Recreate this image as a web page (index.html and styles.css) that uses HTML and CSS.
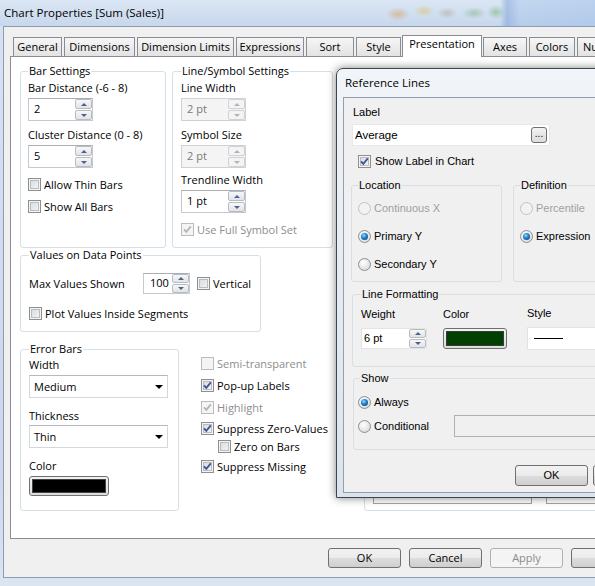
FILE: index.html
```html
<!DOCTYPE html>
<html lang="en">
<head>
<meta charset="utf-8">
<title>Chart Properties</title>
<link rel="stylesheet" href="styles.css">
</head>
<body>
<div class="window">
  <div class="titlebar"><span class="title">Chart Properties [Sum (Sales)]</span></div>
  <div class="client">
    <div class="tabs">
      <div class="tab t-general">General</div>
      <div class="tab t-dims">Dimensions</div>
      <div class="tab t-limits">Dimension Limits</div>
      <div class="tab t-expr">Expressions</div>
      <div class="tab t-sort">Sort</div>
      <div class="tab t-style">Style</div>
      <div class="tab sel t-pres">Presentation</div>
      <div class="tab t-axes">Axes</div>
      <div class="tab t-colors">Colors</div>
      <div class="tab t-num">Number</div>
    </div>
    <div class="panel">
      <div class="left-col">
        <div class="row1">
          <fieldset class="group g-bar">
            <legend>Bar Settings</legend>
            <div class="lbl">Bar Distance (-6 - 8)</div>
            <div class="spin"><div class="val">2</div><div class="btns"><span class="sb up"></span><span class="sb dn"></span></div></div>
            <div class="lbl next">Cluster Distance (0 - 8)</div>
            <div class="spin"><div class="val">5</div><div class="btns"><span class="sb up"></span><span class="sb dn"></span></div></div>
            <div class="chk first"><span class="cb"></span><span>Allow Thin Bars</span></div>
            <div class="chk gap6"><span class="cb"></span><span>Show All Bars</span></div>
          </fieldset>
          <fieldset class="group g-line">
            <legend>Line/Symbol Settings</legend>
            <div class="lbl">Line Width</div>
            <div class="spin off"><div class="val">2 pt</div><div class="btns"><span class="sb up"></span><span class="sb dn"></span></div></div>
            <div class="lbl next">Symbol Size</div>
            <div class="spin off"><div class="val">2 pt</div><div class="btns"><span class="sb up"></span><span class="sb dn"></span></div></div>
            <div class="lbl next4">Trendline Width</div>
            <div class="spin"><div class="val">1 pt</div><div class="btns"><span class="sb up"></span><span class="sb dn"></span></div></div>
            <div class="chk full off"><span class="cb"><svg viewBox="0 0 11 11"><path d="M2 5.3 4.3 7.8 8.8 2.4"/></svg></span><span>Use Full Symbol Set</span></div>
          </fieldset>
        </div>
        <fieldset class="group g-values">
          <legend>Values on Data Points</legend>
          <div class="max-row">
            <span class="max-lbl">Max Values Shown</span>
            <div class="spin small"><div class="val">100</div><div class="btns"><span class="sb up"></span><span class="sb dn"></span></div></div>
            <div class="chk vert"><span class="cb"></span><span>Vertical</span></div>
          </div>
          <div class="chk plot"><span class="cb"></span><span>Plot Values Inside Segments</span></div>
        </fieldset>
        <div class="row3">
          <fieldset class="group g-error">
            <legend>Error Bars</legend>
            <div class="lbl e-first">Width</div>
            <div class="combo"><span>Medium</span><span class="arrow"></span></div>
            <div class="lbl e-next">Thickness</div>
            <div class="combo c2"><span>Thin</span><span class="arrow"></span></div>
            <div class="lbl e-next">Color</div>
            <div class="colorbtn"><div class="swatch black"></div></div>
          </fieldset>
          <div class="checks">
            <div class="chk off"><span class="cb"></span><span>Semi-transparent</span></div>
            <div class="chk m6"><span class="cb"><svg viewBox="0 0 11 11"><path d="M2 5.3 4.3 7.8 8.8 2.4"/></svg></span><span>Pop-up Labels</span></div>
            <div class="chk m6 off"><span class="cb"><svg viewBox="0 0 11 11"><path d="M2 5.3 4.3 7.8 8.8 2.4"/></svg></span><span>Highlight</span></div>
            <div class="chk m5"><span class="cb"><svg viewBox="0 0 11 11"><path d="M2 5.3 4.3 7.8 8.8 2.4"/></svg></span><span>Suppress Zero-Values</span></div>
            <div class="chk m2 indent"><span class="cb"></span><span>Zero on Bars</span></div>
            <div class="chk m4"><span class="cb"><svg viewBox="0 0 11 11"><path d="M2 5.3 4.3 7.8 8.8 2.4"/></svg></span><span>Suppress Missing</span></div>
          </div>
        </div>
      </div>
      <div class="hidden-group">
        <div class="hbox b1"></div>
        <div class="hbox b2"></div>
      </div>
    </div>
    <div class="buttons">
      <div class="btn">OK</div>
      <div class="btn">Cancel</div>
      <div class="btn dis">Apply</div>
      <div class="btn">Help</div>
    </div>
  </div>
</div>

<div class="refdlg">
  <div class="ref-title">Reference Lines</div>
  <div class="ref-client">
    <div class="ref-label">Label</div>
    <div class="ref-text"><span>Average</span><span class="dots">...</span></div>
    <div class="ref-chk"><span class="cb"><svg viewBox="0 0 11 11"><path d="M2 5.3 4.3 7.8 8.8 2.4"/></svg></span><span>Show Label in Chart</span></div>
    <div class="ref-groups">
      <fieldset class="rgroup loc">
        <legend>Location</legend>
        <div class="rrow off"><span class="rb"></span><span>Continuous X</span></div>
        <div class="rrow"><span class="rb on"><span class="dot"></span></span><span>Primary Y</span></div>
        <div class="rrow"><span class="rb"></span><span>Secondary Y</span></div>
      </fieldset>
      <fieldset class="rgroup def">
        <legend>Definition</legend>
        <div class="rrow off"><span class="rb"></span><span>Percentile</span></div>
        <div class="rrow"><span class="rb on"><span class="dot"></span></span><span>Expression</span></div>
      </fieldset>
    </div>
    <fieldset class="rgroup fmt">
      <legend>Line Formatting</legend>
      <div class="fmt-cols">
        <div class="fcol wcol">
          <div class="flbl">Weight</div>
          <div class="spin rspin"><div class="val">6 pt</div><div class="btns"><span class="sb up"></span><span class="sb dn"></span></div></div>
        </div>
        <div class="fcol ccol">
          <div class="flbl">Color</div>
          <div class="colorbtn rcolor"><div class="swatch green"></div></div>
        </div>
        <div class="fcol scol">
          <div class="flbl slbl">Style</div>
          <div class="stylecombo"><span class="line"></span><span class="arrow"></span></div>
        </div>
      </div>
    </fieldset>
    <fieldset class="rgroup show">
      <legend>Show</legend>
      <div class="rrow"><span class="rb on"><span class="dot"></span></span><span>Always</span></div>
      <div class="rrow cond"><span class="rb"></span><span class="cond-lbl">Conditional</span><span class="cond-box"></span></div>
    </fieldset>
    <div class="ref-buttons">
      <div class="btn rbtn">OK</div>
      <div class="btn rbtn">Cancel</div>
    </div>
  </div>
</div>
</body>
</html>
```

FILE: styles.css
```css
* { box-sizing: border-box; }
html, body { margin: 0; padding: 0; }
body {
  width: 595px;
  height: 586px;
  overflow: hidden;
  position: relative;
  font-family: "Open Sans", "Noto Sans", sans-serif;
  font-size: 11px;
  color: #000;
  background: #d3e0ef;
}
.window {
  width: 595px;
  height: 586px;
  display: flex;
  flex-direction: column;
  background: linear-gradient(#d6e2f1, #c9d8eb 80%, #dbe5f2);
}
.titlebar {
  height: 26px;
  flex: none;
  display: flex;
  align-items: center;
  padding-left: 4px;
  background:
    radial-gradient(ellipse 12px 7px at 398px 14px, rgba(214,150,70,.45), transparent),
    radial-gradient(ellipse 10px 6px at 424px 11px, rgba(220,190,70,.45), transparent),
    radial-gradient(ellipse 10px 6px at 447px 13px, rgba(170,160,130,.45), transparent),
    radial-gradient(ellipse 12px 6px at 474px 13px, rgba(120,170,120,.45), transparent),
    radial-gradient(ellipse 9px 7px at 496px 12px, rgba(100,170,90,.45), transparent),
    linear-gradient(90deg, transparent 0 500px, rgba(110,150,210,.45) 507px, rgba(150,185,230,.35) 520px, rgba(150,185,232,.45)),
    linear-gradient(#dbe6f4, #c7d7ec);
}
.title { font-size: 11.5px; line-height: 16px; }

.client {
  flex: none;
  height: 552px;
  margin-left: 3px;
  border-top: 1px solid #8d9cb1;
  border-left: 1px solid #8d9cb1;
  border-bottom: 1px solid #8d9cb1;
  background: #f0f0f0;
  padding-left: 6px;
}

/* tabs */
.tabs {
  height: 29px;
  display: flex;
  align-items: flex-end;
  gap: 2px;
  padding-left: 3px;
  white-space: nowrap;
}
.tab {
  flex: none;
  height: 19px;
  border: 1px solid #898c95;
  border-bottom: none;
  background: linear-gradient(#f6f6f6, #ececec 50%, #e3e3e3);
  text-align: center;
  line-height: 17px;
  overflow: hidden;
}
.tab.sel {
  height: 22px;
  margin: 0 -1px -1px;
  line-height: 16px;
  background: #fff;
  position: relative;
  z-index: 1;
}
.t-general { width: 49px; }
.t-dims { width: 71px; }
.t-limits { width: 97px; }
.t-expr { width: 68px; }
.t-sort { width: 48px; }
.t-style { width: 45px; }
.t-pres { width: 80px; }
.t-axes { width: 44px; }
.t-colors { width: 46px; }
.t-num { width: 60px; text-align: left; padding-left: 5px; }

/* panel */
.panel {
  width: 600px;
  height: 483px;
  border: 1px solid #898c95;
  background: #fff;
  display: flex;
  align-items: flex-start;
  padding: 7px 0 0 9px;
}
.left-col {
  width: 313px;
  flex: none;
  display: flex;
  flex-direction: column;
  align-items: flex-start;
}
.row1 { display: flex; gap: 6px; }
fieldset.group {
  margin: 0;
  min-width: 0;
  border: 1px solid #d5dfe5;
  border-radius: 3px;
}
fieldset.group > legend {
  padding: 0 1px;
  line-height: 14px;
}
.g-bar { width: 146px; padding: 2px 7px 10px; }
.g-line { width: 161px; padding: 2px 8px 10px; }

.lbl { line-height: 15px; white-space: nowrap; }
.lbl.next { margin-top: 6px; }
.lbl.next4 { margin-top: 4px; }

.spin {
  margin-top: 3px;
  width: 65px;
  height: 23px;
  display: flex;
  border: 1px solid #c5c8cf;
  border-top-color: #abadb3;
  background: #fff;
}
.spin .val {
  flex: 1;
  padding-left: 5px;
  line-height: 20px;
}
.spin .btns {
  width: 17px;
  flex: none;
  display: flex;
  flex-direction: column;
  gap: 1px;
}
.sb {
  flex: 1;
  border: 1px solid #b7bcc3;
  border-radius: 2px;
  background: linear-gradient(#f7f7f7, #e2e3e5);
  display: flex;
  align-items: center;
  justify-content: center;
}
.sb::after {
  content: "";
  border-left: 3px solid transparent;
  border-right: 3px solid transparent;
}
.sb.up::after { border-bottom: 3px solid #4d6190; }
.sb.dn::after { border-top: 3px solid #4d6190; }
.spin.off { background: #f4f4f4; border-color: #cfd1d5; color: #7a7a7a; }
.spin.off .sb { border-color: #cfd2d6; background: #f4f4f4; }
.spin.off .sb.up::after { border-bottom-color: #b3b3b3; }
.spin.off .sb.dn::after { border-top-color: #b3b3b3; }
.spin.small { margin-top: 0; width: 47px; height: 21px; }
.spin.small .val { line-height: 18px; padding-left: 6px; }

/* checkboxes */
.chk {
  display: flex;
  align-items: center;
  gap: 3px;
  height: 16px;
  line-height: 15px;
  white-space: nowrap;
}
.chk.first { margin-top: 8px; }
.chk.gap6 { margin-top: 6px; }
.chk.full { margin-top: 8px; }
.cb {
  flex: none;
  width: 13px;
  height: 13px;
  border: 1px solid #8e8f8f;
  background: linear-gradient(135deg, #d3d6da, #f9f9f9);
  box-shadow: inset 0 0 0 1px #f4f4f4, inset 0 0 0 2px #b9bdc3;
}
.cb svg { display: block; width: 11px; height: 11px; }
.cb path { fill: none; stroke: #3e5596; stroke-width: 1.8; }
.chk.off { color: #8d8d8d; }
.chk.off .cb { border-color: #bcbcbc; box-shadow: none; background: #f4f4f4; }
.chk.off .cb path { stroke: #b4b4b4; }

.g-values { width: 241px; padding: 11px 8px 10px; margin-top: 8px; }
.max-row { display: flex; align-items: center; height: 21px; }
.max-lbl { width: 114px; flex: none; }
.chk.vert { margin-left: 7px; }
.chk.plot { margin-top: 11px; }

.row3 { display: flex; margin-top: 10px; align-items: flex-start; }
.g-error { width: 159px; padding: 1px 8px 14px; }
.lbl.e-next { margin-top: 10px; }
.combo {
  margin-top: 3px;
  width: 139px;
  height: 23px;
  border: 1px solid #d5d7dc;
  border-top-color: #b5b8bf;
  background: #fff;
  display: flex;
  align-items: center;
  justify-content: space-between;
  padding: 0 4px 0 4px;
  line-height: 15px;
}
.combo.c2 { margin-top: 2px; }
.arrow {
  border-left: 4px solid transparent;
  border-right: 4px solid transparent;
  border-top: 4px solid #000;
}
.colorbtn {
  margin-top: 3px;
  width: 80px;
  height: 20px;
  border: 1px solid #707070;
  border-radius: 3px;
  background: linear-gradient(#f2f2f2, #dcdcdc);
  padding: 2px;
}
.swatch { height: 100%; border: 1px solid #444; }
.swatch.black { background: #000; }
.swatch.green { background: #004000; border-color: #3a3a3a; }

.checks { margin-left: 22px; padding-top: 13px; }
.checks .m6 { margin-top: 6px; }
.checks .m5 { margin-top: 5px; }
.checks .m4 { margin-top: 4px; }
.checks .m2 { margin-top: 2px; }
.checks .indent { margin-left: 17px; }

.hidden-group {
  margin-left: 31px;
  margin-top: 40px;
  width: 260px;
  height: 407px;
  flex: none;
  border: 1px solid #d5dfe5;
  border-radius: 3px;
  display: flex;
  align-items: flex-end;
  gap: 14px;
  padding: 0 8px 6px;
}
.hbox { height: 30px; border: 1px solid #a3a3a3; background: #fff; flex: none; }
.hbox.b1 { width: 159px; }
.hbox.b2 { width: 100px; }

/* bottom buttons */
.buttons {
  display: flex;
  gap: 8px;
  margin-top: 9px;
  padding-left: 318px;
}
.btn {
  flex: none;
  width: 73px;
  height: 20px;
  border: 1px solid #707070;
  border-radius: 3px;
  background: linear-gradient(#f2f2f2 0, #ebebeb 50%, #dddddd 50%, #cfcfcf 100%);
  text-align: center;
  line-height: 18px;
}
.btn.dis {
  border-color: #adb2b5;
  background: #f4f4f4;
  color: #8a8a8a;
}

/* reference lines dialog */
.refdlg {
  position: absolute;
  left: 336px;
  top: 68px;
  width: 300px;
  height: 430px;
  border: 1px solid #3f454c;
  border-radius: 7px 7px 0 0;
  background: linear-gradient(#f1f4f8, #e3e9f0 60%, #dbe3ec);
  box-shadow: 0 0 9px rgba(0,0,0,.5);
  padding-left: 6px;
  font-family: "Liberation Sans", Arial, sans-serif;
  font-size: 11px;
}
.ref-title {
  height: 28px;
  line-height: 28px;
  padding-left: 2px;
  font-family: "Open Sans", "Noto Sans", sans-serif;
  font-size: 11.5px;
}
.ref-client {
  height: 396px;
  border: 1px solid #939fae;
  background: #f0f0f0;
  padding: 8px 0 0 8px;
}
.ref-label { line-height: 13px; margin-left: 1px; }
.ref-text {
  margin-top: 5px;
  width: 198px;
  height: 22px;
  background: #fff;
  border: 1px solid #e8e8e8;
  display: flex;
  align-items: center;
  justify-content: space-between;
  padding: 0 2px 0 2px;
  font-size: 11.5px;
}
.dots {
  width: 16px;
  height: 16px;
  border: 1px solid #707070;
  border-radius: 3px;
  background: linear-gradient(#f2f2f2, #dcdcdc);
  font-size: 10px;
  line-height: 11px;
  text-align: center;
}
.ref-chk {
  margin-top: 8px;
  margin-left: 6px;
  display: flex;
  align-items: center;
  gap: 4px;
  height: 14px;
}
.ref-groups {
  display: flex;
  gap: 11px;
  margin-top: 11px;
  margin-left: -1px;
}
fieldset.rgroup {
  margin: 0;
  min-width: 0;
  flex: none;
  border: 1px solid #d5dfe5;
  border-radius: 3px;
}
fieldset.rgroup > legend { padding: 0 1px; line-height: 13px; }
.rgroup.loc { width: 151px; padding: 9px 6px 10px; }
.rgroup.def { width: 200px; padding: 9px 6px 10px; }
.rrow {
  display: flex;
  align-items: center;
  gap: 3px;
  height: 14px;
  white-space: nowrap;
}
.rrow + .rrow { margin-top: 14px; }
.rrow.off { color: #a0a0a0; }
.rb {
  flex: none;
  width: 13px;
  height: 13px;
  border-radius: 50%;
  border: 1px solid #8f8f8f;
  background: radial-gradient(circle at 40% 35%, #ffffff, #e6e6e6 55%, #cfcfcf);
  display: flex;
  align-items: center;
  justify-content: center;
}
.rrow.off .rb { border-color: #c2c2c2; background: #f2f2f2; }
.rb .dot {
  width: 7px;
  height: 7px;
  border-radius: 50%;
  background: radial-gradient(circle at 40% 35%, #9fe0ff 0, #2a8fd6 35%, #0b4f94 80%, #0a3c72);
}
.rgroup.fmt { margin-top: 6px; width: 270px; padding: 7px 8px 16px; }
.fmt-cols { display: flex; align-items: flex-start; }
.flbl { line-height: 13px; }
.flbl.slbl { margin-top: -1px; }
.wcol { width: 66px; flex: none; }
.ccol { margin-left: 16px; width: 64px; flex: none; }
.scol { margin-left: 20px; width: 120px; flex: none; }
.spin.rspin { margin-top: 7px; width: 66px; height: 21px; border-color: #e3e3e3; }
.spin.rspin .val { padding-left: 2px; line-height: 18px; }
.colorbtn.rcolor { margin-top: 7px; width: 64px; height: 21px; }
.stylecombo {
  margin-top: 7px;
  width: 120px;
  height: 23px;
  background: #fff;
  border: 1px solid #e3e3e3;
  display: flex;
  align-items: center;
  justify-content: space-between;
  padding: 0 6px 0 6px;
}
.stylecombo .line { width: 29px; height: 1px; background: #000; }
.rgroup.show { margin-top: 5px; margin-left: 1px; width: 270px; padding: 10px 4px 12px; }
.rgroup.show > legend { margin-left: 2px; }
.rrow.cond { height: 22px; margin-top: 6px; }
.cond-lbl { width: 77px; flex: none; }
.cond-box {
  width: 180px;
  height: 22px;
  border: 1px solid #b0b0b0;
  background: #f0f0f0;
  flex: none;
}
.ref-buttons { display: flex; gap: 5px; margin-top: 15px; margin-left: 163px; }
.btn.rbtn { height: 21px; line-height: 19px; }
```
